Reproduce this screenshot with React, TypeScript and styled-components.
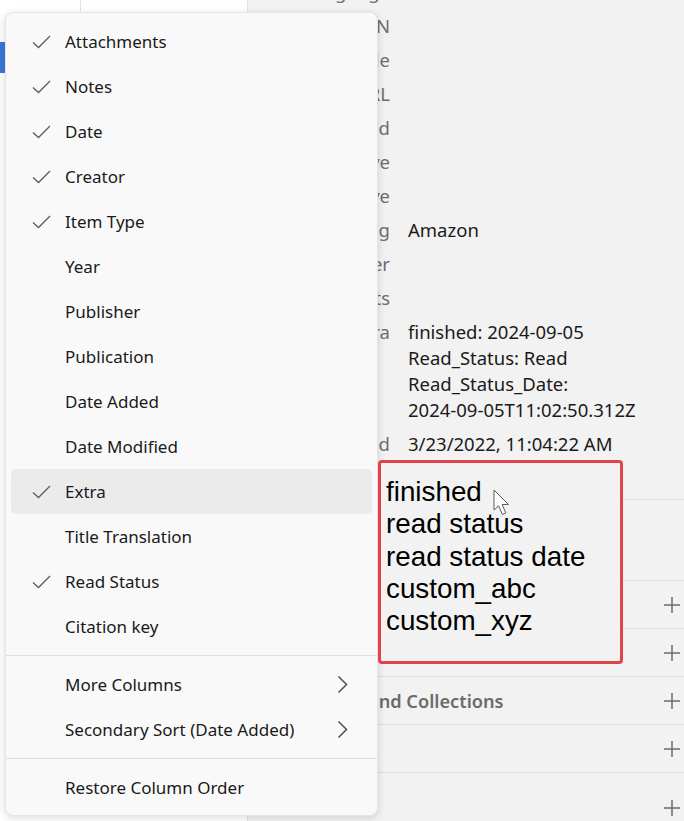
import styled, { createGlobalStyle } from "styled-components";

const Global = createGlobalStyle`
  html, body {
    margin: 0;
    padding: 0;
    height: 100%;
    overflow: hidden;
  }
  body {
    font-family: "Noto Sans", "Open Sans", sans-serif;
    color: #1a1a1a;
  }
`;

type MenuEntry = { label: string; checked?: boolean; hover?: boolean };

const columns: MenuEntry[] = [
  { label: "Attachments", checked: true },
  { label: "Notes", checked: true },
  { label: "Date", checked: true },
  { label: "Creator", checked: true },
  { label: "Item Type", checked: true },
  { label: "Year" },
  { label: "Publisher" },
  { label: "Publication" },
  { label: "Date Added" },
  { label: "Date Modified" },
  { label: "Extra", checked: true, hover: true },
  { label: "Title Translation" },
  { label: "Read Status", checked: true },
  { label: "Citation key" },
];

const infoRows: { label: string; value?: string[] }[] = [
  { label: "Language" },
  { label: "ISBN" },
  { label: "Short Title" },
  { label: "URL" },
  { label: "Accessed" },
  { label: "Archive" },
  { label: "Loc. in Archive" },
  { label: "Library Catalog", value: ["Amazon"] },
  { label: "Call Number" },
  { label: "Rights" },
  {
    label: "Extra",
    value: [
      "finished: 2024-09-05",
      "Read_Status: Read",
      "Read_Status_Date:",
      "2024-09-05T11:02:50.312Z",
    ],
  },
  { label: "Date Added", value: ["3/23/2022, 11:04:22 AM"] },
  { label: "Modified", value: ["3/23/2022, 11:04:22 AM"] },
];

const sections = [
  { title: "Attachments" },
  { title: "Notes" },
  { title: "Libraries and Collections" },
  { title: "Tags" },
  { title: "Related", tall: true },
];

const Check = () => (
  <svg width="19" height="14" viewBox="0 0 19 14">
    <path d="M1 7.5 L6.5 12.5 L18 1" fill="none" stroke="#5c5c5c" strokeWidth="1.3" />
  </svg>
);

const Chevron = () => (
  <svg width="11" height="19" viewBox="0 0 11 19">
    <path d="M1.5 1.5 L9.5 9.5 L1.5 17.5" fill="none" stroke="#555" strokeWidth="1.6" />
  </svg>
);

const Plus = () => (
  <svg width="18" height="18" viewBox="0 0 18 18">
    <path d="M9 1 V17 M1 9 H17" fill="none" stroke="#6b6b6b" strokeWidth="1.5" />
  </svg>
);

const Cursor = () => (
  <svg width="20" height="28" viewBox="0 0 20 28">
    <path
      d="M1 1 L1 21 L5.6 16.8 L9.4 25.4 L12.8 23.9 L9.1 15.6 L15.4 15.4 Z"
      fill="#fff"
      stroke="#5a5a5a"
      strokeWidth="1"
      strokeLinejoin="round"
    />
  </svg>
);

const App = () => {
  return (
    <Window>
      <Global />
      <ItemsPane>
        <TreeRow>
          <TreeCell $divided>&nbsp;</TreeCell>
          <TreeCell>&nbsp;</TreeCell>
        </TreeRow>
        <TreeRow />
        <TreeRow $selected />
      </ItemsPane>

      <ItemPane>
        <InfoSection>
          {infoRows.map((row) => (
            <InfoRow key={row.label}>
              <InfoLabel>{row.label}</InfoLabel>
              <InfoValue>
                {(row.value ?? [""]).map((line, i) => (
                  <div key={i}>{line || "\u00a0"}</div>
                ))}
              </InfoValue>
            </InfoRow>
          ))}
        </InfoSection>
        <AbstractSection>
          <SectionTitle>Abstract</SectionTitle>
        </AbstractSection>
        {sections.map((s) => (
          <SectionHeader key={s.title} $tall={s.tall}>
            <SectionTitle>{s.title}</SectionTitle>
            <Plus />
          </SectionHeader>
        ))}
      </ItemPane>

      <Menu>
        {columns.map((c) => (
          <MenuRow key={c.label} $hover={c.hover}>
            <CheckSlot>{c.checked && <Check />}</CheckSlot>
            <span>{c.label}</span>
          </MenuRow>
        ))}
        <Separator />
        <MenuRow>
          <CheckSlot />
          <span>More Columns</span>
          <Chevron />
        </MenuRow>
        <MenuRow>
          <CheckSlot />
          <span>Secondary Sort (Date Added)</span>
          <Chevron />
        </MenuRow>
        <Separator />
        <MenuRow>
          <CheckSlot />
          <span>Restore Column Order</span>
        </MenuRow>
      </Menu>

      <Annotation>
        <div>finished</div>
        <div>read status</div>
        <div>read status date</div>
        <div>custom_abc</div>
        <div>custom_xyz</div>
      </Annotation>

      <CursorSpot>
        <Cursor />
      </CursorSpot>
    </Window>
  );
};

export default App;

const Window = styled.div`
  position: relative;
  display: flex;
  width: 684px;
  height: 821px;
  overflow: hidden;
  background: #fff;
`;

const ItemsPane = styled.div`
  width: 247px;
  flex: none;
  background: #fff;
  border-right: 1px solid #e2e2e2;
  margin-top: -20px;
`;

const TreeRow = styled.div<{ $selected?: boolean }>`
  display: flex;
  height: 31px;
  background: ${(p) => (p.$selected ? "#3a76d8" : "transparent")};
`;

const TreeCell = styled.div<{ $divided?: boolean }>`
  width: 80px;
  border-right: ${(p) => (p.$divided ? "1px solid #e2e2e2" : "none")};
`;

const ItemPane = styled.div`
  flex: 1;
  background: #f2f2f2;
  min-width: 0;
`;

const InfoSection = styled.div`
  margin-top: -25px;
  padding-bottom: 4px;
  border-bottom: 1px solid #dedede;
`;

const InfoRow = styled.div`
  display: grid;
  grid-template-columns: 142px 1fr;
  column-gap: 18px;
  align-items: start;
  padding: 4px 0;
  font-size: 18.5px;
  line-height: 26px;
`;

const InfoLabel = styled.div`
  text-align: right;
  color: #6e6e6e;
  white-space: nowrap;
`;

const InfoValue = styled.div`
  color: #1a1a1a;
  white-space: nowrap;
`;

const AbstractSection = styled.div`
  height: 80px;
  border-bottom: 1px solid #dedede;
  padding-left: 297px;
  display: flex;
  align-items: center;
  color: transparent;
`;

const SectionHeader = styled.div<{ $tall?: boolean }>`
  display: flex;
  align-items: center;
  justify-content: space-between;
  height: ${(p) => (p.$tall ? "62px" : "48px")};
  padding: ${(p) => (p.$tall ? "8px 3px 0 38px" : "0 3px 0 38px")};
  box-sizing: border-box;
  border-bottom: 1px solid #dedede;
`;

const SectionTitle = styled.span`
  font-size: 18.2px;
  font-weight: 600;
  color: #6b6b6b;
`;

const Menu = styled.div`
  position: absolute;
  left: 5px;
  top: 12px;
  width: 373px;
  box-sizing: border-box;
  padding: 6px 0 5px;
  background: #f9f9f9;
  border: 1px solid #e4e4e4;
  border-radius: 8px;
  box-shadow: 0 2px 8px rgba(0, 0, 0, 0.14);
  font-size: 17px;
  color: #1a1a1a;
`;

const MenuRow = styled.div<{ $hover?: boolean }>`
  display: grid;
  grid-template-columns: 54px 1fr auto;
  align-items: center;
  height: 45px;
  margin: 0 5px;
  padding-right: 24px;
  border-radius: 5px;
  background: ${(p) => (p.$hover ? "#ebebeb" : "transparent")};
  white-space: nowrap;
`;

const CheckSlot = styled.div`
  display: flex;
  align-items: center;
  padding-left: 21px;
  height: 14px;
`;

const Separator = styled.div`
  height: 1px;
  background: #e0e0e0;
  margin: 6px 0;
`;

const Annotation = styled.div`
  position: absolute;
  left: 378px;
  top: 460px;
  width: 245px;
  height: 204px;
  box-sizing: border-box;
  padding: 13px 0 0 5px;
  border: 3px solid #e0444a;
  border-radius: 4px;
  background: #f2f2f2;
  font-family: "Liberation Sans", Arial, sans-serif;
  font-size: 27.8px;
  line-height: 32.3px;
  color: #000;
`;

const CursorSpot = styled.div`
  position: absolute;
  left: 493px;
  top: 489px;
  line-height: 0;
`;
